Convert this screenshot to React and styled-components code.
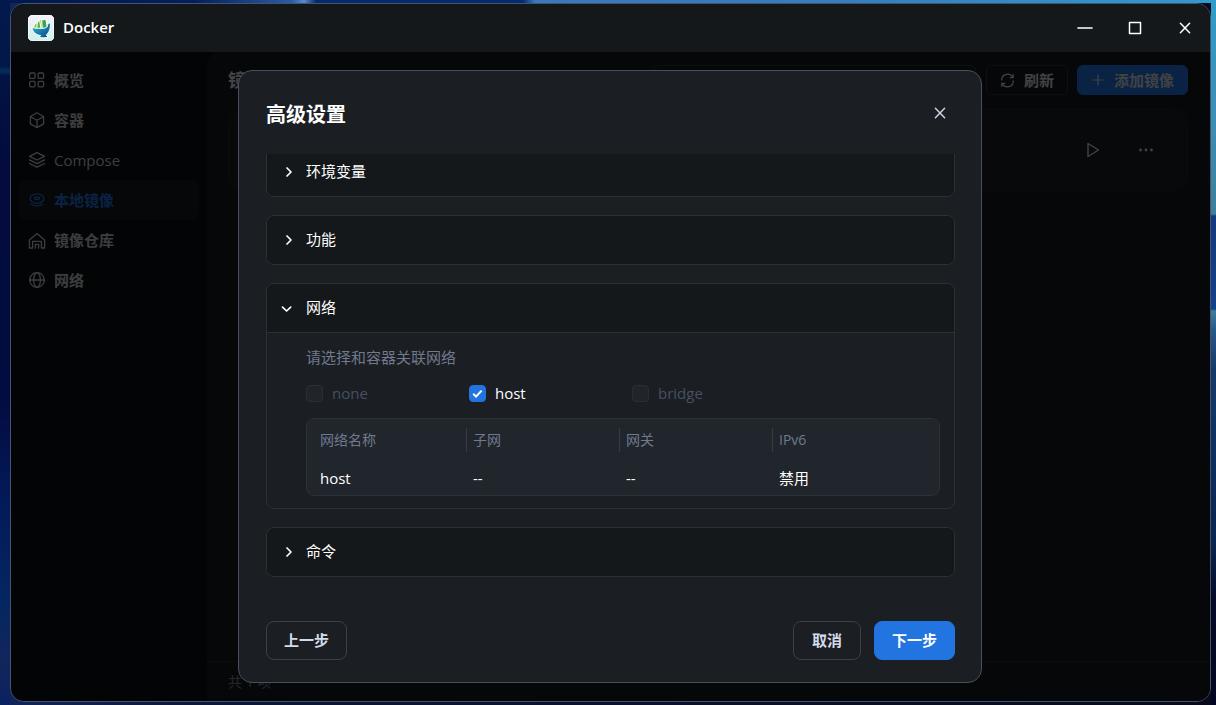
import React, { useLayoutEffect, useRef } from "react";
import styled, { createGlobalStyle, css } from "styled-components";

const GlobalStyle = createGlobalStyle`
  *, *::before, *::after { box-sizing: border-box; }
  body { margin: 0; background: #030a2c; }
  body, button, input, table { font-family: "Open Sans", "Noto Sans CJK SC", sans-serif; font-size: 15px; line-height: 20px; }
  button { border: 0; padding: 0; background: none; color: inherit; cursor: pointer; }
  svg { display: block; flex: none; fill: none; stroke: currentColor; stroke-linejoin: round; stroke-linecap: round; }
`;

const Desktop = styled.div`
  height: 100vh;
  padding: 3px 5px 3px 10px;
  background:
    linear-gradient(#2f9ccb 0, #3b8fb4 120px, #3c7f9c 214px, #143a7e 216px, #12408a 309px, #3d7f9c 311px, #28588a 330px, #163a68 368px, #0c2c5a 480px, #0a2450 544px, #050a26 600px, #030620 100%) right / 5px 100% no-repeat,
    linear-gradient(#03184c 0, #021848 66px, #06305e 71px, #021344 76px, #030c3c 160px, #030c40 400px, #031a58 500px, #042660 600px, #12265c 660px, #0a2260 100%) left / 10px 100% no-repeat,
    linear-gradient(90deg, #03184c 0, #04205a 16%, #2a5ca4 24%, #5a8cc8 25%, #042a70 26%, #042a70 43%, #3a78b8 44%, #3480ba 70%, #2f9ccb 100%) top / 100% 3px no-repeat,
    linear-gradient(90deg, #12265c 0, #0c1838 16%, #0a1026 60%, #080a1c 100%);
`;

const Window = styled.div`
  height: 100%;
  display: flex;
  flex-direction: column;
  overflow: hidden;
  border: 1px solid #46526e;
  border-radius: 14px;
  background: #0c1014;
  color: #dadde2;
`;

const TitleBar = styled.header`
  flex: none;
  display: flex;
  align-items: center;
  gap: 9px;
  height: 48px;
  padding: 0 0 0 17px;
  background: #14181a;
  color: #fff;
`;

const AppName = styled.h1`
  flex: 1;
  margin: 0;
  padding-bottom: 2px;
  font-size: 15px;
  font-weight: 600;
`;

const WindowControls = styled.div`
  display: flex;
`;

const WindowButton = styled.button`
  display: grid;
  place-items: center;
  width: 50px;
  height: 48px;
`;

const Body = styled.div`
  position: relative;
  flex: 1;
  min-height: 0;
  display: flex;
`;

const Sidebar = styled.nav`
  flex: none;
  width: 196px;
  padding: 8px;
`;

const NavLink = styled.a`
  display: flex;
  align-items: center;
  gap: 8px;
  height: 40px;
  padding: 0 9px;
  border-radius: 8px;
  color: ${(p) => (p.$active ? "#2274e0" : "#c8ccd2")};
  background: ${(p) => (p.$active ? "#14181c" : "transparent")};
  font-weight: ${(p) => (p.$latin ? 400 : 600)};
  text-decoration: none;
`;

const Main = styled.main`
  flex: 1;
  min-width: 0;
  display: flex;
  flex-direction: column;
  border-radius: 14px 0 0 0;
  background: #161a1e;
`;

const Toolbar = styled.div`
  display: flex;
  align-items: center;
  gap: 9px;
  padding: 13px 22px 14px 21px;
`;

const PageTitle = styled.h2`
  flex: 1;
  margin: 0;
  font-size: 18px;
  line-height: 30px;
`;

const Search = styled.input`
  width: 327px;
  height: 30px;
  border: 1px solid #30363c;
  border-radius: 8px;
  background: transparent;
`;

const ToolButton = styled.button`
  display: flex;
  align-items: center;
  justify-content: center;
  gap: 9px;
  height: 30px;
  padding: 0 13px;
  border: 1px solid ${(p) => (p.$primary ? "#2274e0" : "#30363c")};
  border-radius: 6px;
  background: ${(p) => (p.$primary ? "#2274e0" : "transparent")};
  font-weight: 600;
`;

const ImageCard = styled.section`
  display: flex;
  align-items: center;
  justify-content: flex-end;
  gap: 35px;
  height: 82px;
  margin: 0 22px 0 21px;
  padding: 0 32px;
  border: 1px solid #20252a;
  border-radius: 14px;
  background: #1a1e22;
`;

const StatusBar = styled.footer`
  height: 40px;
  margin-top: auto;
  padding: 10px 21px;
  border-top: 1px solid #262b30;
  color: #7c828c;
  font-size: 14px;
`;

const Overlay = styled.div`
  position: absolute;
  inset: 0;
  display: flex;
  justify-content: center;
  padding: 18px 19px 18px 18px;
  background: rgba(0, 0, 0, 0.7);
`;

const Dialog = styled.section`
  display: flex;
  flex-direction: column;
  width: 100%;
  max-width: 744px;
  padding: 22px 26px 22px 27px;
  border: 1px solid #46505e;
  border-radius: 14px;
  background: #1b1e23;
  color: #fff;
`;

const DialogHeader = styled.header`
  flex: none;
  display: flex;
  align-items: center;
  justify-content: space-between;
  height: 40px;
  margin-bottom: 21px;
`;

const DialogTitle = styled.h2`
  margin: 0;
  padding-top: 4px;
  font-size: 20px;
  line-height: 28px;
`;

const CloseButton = styled.button`
  display: grid;
  place-items: center;
  width: 30px;
  height: 40px;
  color: #ccd4e4;
`;

const SettingsList = styled.div`
  flex: 1;
  min-height: 0;
  display: flex;
  flex-direction: column;
  gap: 18px;
  overflow: auto;
  scrollbar-width: none;
`;

const Panel = styled.section`
  flex: none;
  border: 1px solid #2c3136;
  border-radius: 8px;
  overflow: hidden;
`;

const PanelToggle = styled.button`
  display: flex;
  align-items: center;
  gap: 7px;
  width: 100%;
  height: 48px;
  padding: 0 14px 2px;
  background: #14181a;
`;

const PanelBody = styled.div`
  padding: 14px 14px 12px 39px;
  border-top: 1px solid #2c3136;
`;

const Hint = styled.p`
  margin: 0 0 16px;
  color: #6f7a8e;
`;

const Options = styled.div`
  display: flex;
  margin-bottom: 15px;
`;

const Option = styled.label`
  display: flex;
  align-items: center;
  gap: 9px;
  width: 163px;
  color: ${(p) => (p.$disabled ? "#465062" : "#fff")};
`;

const Tick = styled.input`
  appearance: none;
  width: 17px;
  height: 17px;
  margin: 0;
  border: 1px solid #2a2f36;
  border-radius: 4px;
  background: #20242b;
  &:checked {
    border-color: #2274e0;
    background: #2274e0 url("data:image/svg+xml,%3Csvg xmlns='http://www.w3.org/2000/svg' viewBox='0 0 15 15'%3E%3Cpath d='M3.2 7.8l2.8 2.8 5.6-6' fill='none' stroke='white' stroke-width='2'/%3E%3C/svg%3E") center no-repeat;
  }
`;

const TableFrame = styled.div`
  border: 1px solid #2c3136;
  border-radius: 8px;
  background: #21252c;
`;

const NetworkTable = styled.table`
  width: 100%;
  table-layout: fixed;
  border-collapse: collapse;
  text-align: left;
  th, td { padding: 0; }
  td { height: 34px; padding-left: 7px; }
  td:first-child { padding-left: 13px; }
`;

const HeadCell = styled.th`
  height: 42px;
  color: #6f7a8e;
  font-size: 14px;
  font-weight: 400;
  span {
    display: block;
    padding: 2px 6px;
    border-left: 1px solid #363b44;
  }
  &:first-child span { border: 0; padding-left: 13px; }
`;

const Actions = styled.footer`
  flex: none;
  display: flex;
  gap: 13px;
  margin-top: 44px;
`;

const actionTone = {
  plain: css`border: 1px solid #38424a; color: #d4dbe8;`,
  primary: css`border: 1px solid #2274e0; background: #2274e0; color: #fff;`,
};

const ActionButton = styled.button`
  min-width: 68px;
  height: 39px;
  padding: 0 17px 2px;
  border-radius: 8px;
  font-weight: 600;
  ${(p) => actionTone[p.$tone || "plain"]}
  ${(p) => p.$start && css`margin-right: auto;`}
`;

const Icon = ({ size = 18, width = 1.4, children }) => (
  <svg width={size} height={size} viewBox="0 0 18 18" strokeWidth={width} aria-hidden="true">{children}</svg>
);

const GridIcon = () => <Icon width={1.3}><rect x="1.7" y="2" width="5.4" height="5.4" rx="1" /><rect x="10.2" y="2" width="5.4" height="5.4" rx="1" /><rect x="1.7" y="10.4" width="5.4" height="5.4" rx="1" /><rect x="10.2" y="10.4" width="5.4" height="5.4" rx="1" /></Icon>;
const BoxIcon = () => <Icon width={1.3}><path d="M9 1.8l6.6 3.7v7.4L9 16.6l-6.6-3.7V5.5z M2.6 5.7L9 9.2l6.4-3.5M9 9.2v7.2" /></Icon>;
const LayersIcon = () => <Icon width={1.3}><path d="M9 1.6l7.5 3.7L9 9 1.5 5.3zM1.5 8.9L9 12.6l7.5-3.7M1.5 12.5L9 16.2l7.5-3.7" /></Icon>;
const DiskIcon = () => <Icon width={1.3}><ellipse cx="9" cy="7.6" rx="6.8" ry="4.8" /><ellipse cx="9" cy="7.2" rx="2.4" ry="1.3" /><path d="M3.3 13.2c3 2.2 8.4 2.2 11.4 0" /></Icon>;
const HouseIcon = () => <Icon width={1.3}><path d="M1.4 9L9 2.6l7.600 6.400v8h-3.200v-6.600H4.600V17H1.400zM7.400 17v-3.600h3.200V17" /></Icon>;
const GlobeIcon = () => <Icon width={1.3}><circle cx="9" cy="9" r="7.3" /><ellipse cx="9" cy="9" rx="3.4" ry="7.3" /><path d="M1.7 9h14.6" /></Icon>;
const RefreshIcon = () => <Icon size={15} width={1.5}><path d="M2 8.400A7 7 0 0115.400 5.600M16 9.600A7 7 0 012.600 12.400M15.800 2v3.600h-3.600M2.200 16v-3.600h3.600" /></Icon>;
const PlusIcon = () => <Icon size={14} width={1.6}><path d="M9 2.5v13M2.5 9h13" /></Icon>;
const CrossIcon = () => <Icon width={1.5}><path d="M4.4 4.2l9.2 9.6M13.6 4.2l-9.2 9.6" /></Icon>;
const Chevron = ({ open }) => <Icon width={1.7}><path d={open ? "M1.5 9.2L5.6 13l4.1-3.8" : "M6 6L10 10l-4 4"} /></Icon>;

const Logo = () => (
  <svg width="26" height="26" viewBox="0 0 26 26" stroke="none" aria-hidden="true">
    <defs>
      <linearGradient id="tile" x2="0" y2="1"><stop stopColor="#f4f1fd" /><stop offset="1" stopColor="#cdf1ee" /></linearGradient>
      <linearGradient id="bowl" x2="1" y2="1"><stop stopColor="#3cc0cc" /><stop offset=".5" stopColor="#1780b0" /><stop offset="1" stopColor="#08467e" /></linearGradient>
    </defs>
    <rect width="26" height="26" rx="5" fill="url(#tile)" />
    <path d="M5.200 13.500L6.500 9.200l3-1.800 2-3 4 .6 1.200 9z" fill="#8ccb45" />
    <path d="M14 5l3.800-.8 1.800 9.400h-5z" fill="#35a455" />
    <path d="M9.500 7.400L11.500 4.400 13 14H9z" fill="#5fb448" />
    <path d="M3.800 12.600c4 1 9.500.8 13.400.4l2.300-1.600-.6-3.200 1.500.6 1.700-1.400c.6 2.400.3 5.500-.5 7.500-.8 2.400-2 4-3.300 5l1.800 2.200c-3 1-6.200 1-9 .1l1.600-1.600C8.600 19.800 4.600 18 3.800 12.600z" fill="url(#bowl)" />
  </svg>
);

const navItems = [
  { label: "概览", icon: GridIcon },
  { label: "容器", icon: BoxIcon },
  { label: "Compose", icon: LayersIcon, latin: true },
  { label: "本地镜像", icon: DiskIcon, active: true },
  { label: "镜像仓库", icon: HouseIcon },
  { label: "网络", icon: GlobeIcon },
];

const networks = [
  { name: "none", disabled: true },
  { name: "host", checked: true },
  { name: "bridge", disabled: true },
];

function SettingsPanel({ title, children }) {
  return (
    <Panel>
      <PanelToggle type="button" aria-expanded={Boolean(children)}>
        <Chevron open={Boolean(children)} />
        {title}
      </PanelToggle>
      {children && <PanelBody>{children}</PanelBody>}
    </Panel>
  );
}

function AdvancedSettings() {
  const list = useRef(null);
  useLayoutEffect(() => {
    list.current.scrollTop = list.current.scrollHeight;
  }, []);

  return (
    <Dialog role="dialog" aria-modal="true" aria-labelledby="dialog-title">
      <DialogHeader>
        <DialogTitle id="dialog-title">高级设置</DialogTitle>
        <CloseButton type="button" aria-label="关闭"><CrossIcon /></CloseButton>
      </DialogHeader>
      <SettingsList ref={list}>
        <SettingsPanel title="环境变量" />
        <SettingsPanel title="功能" />
        <SettingsPanel title="网络">
          <Hint>请选择和容器关联网络</Hint>
          <Options>
            {networks.map((n) => (
              <Option key={n.name} $disabled={n.disabled}>
                <Tick type="checkbox" defaultChecked={n.checked} disabled={n.disabled} />
                {n.name}
              </Option>
            ))}
          </Options>
          <TableFrame>
            <NetworkTable>
              <colgroup><col width="159" /><col width="153" /><col width="153" /><col /></colgroup>
              <thead>
                <tr>{["网络名称", "子网", "网关", "IPv6"].map((h) => <HeadCell key={h}><span>{h}</span></HeadCell>)}</tr>
              </thead>
              <tbody>
                <tr><td>host</td><td>--</td><td>--</td><td>禁用</td></tr>
              </tbody>
            </NetworkTable>
          </TableFrame>
        </SettingsPanel>
        <SettingsPanel title="命令" />
      </SettingsList>
      <Actions>
        <ActionButton type="button" $start>上一步</ActionButton>
        <ActionButton type="button">取消</ActionButton>
        <ActionButton type="button" $tone="primary">下一步</ActionButton>
      </Actions>
    </Dialog>
  );
}

export default function App() {
  return (
    <Desktop>
      <GlobalStyle />
      <Window>
        <TitleBar>
          <Logo />
          <AppName>Docker</AppName>
          <WindowControls>
            <WindowButton type="button" aria-label="最小化"><Icon width={1.6}><path d="M2 9h14" /></Icon></WindowButton>
            <WindowButton type="button" aria-label="最大化"><Icon width={1.5}><rect x="3.500" y="3.500" width="11" height="11" /></Icon></WindowButton>
            <WindowButton type="button" aria-label="关闭窗口"><CrossIcon /></WindowButton>
          </WindowControls>
        </TitleBar>
        <Body>
          <Sidebar>
            {navItems.map(({ label, icon: ItemIcon, active, latin }) => (
              <NavLink key={label} href="#" $active={active} $latin={latin}><ItemIcon />{label}</NavLink>
            ))}
          </Sidebar>
          <Main>
            <Toolbar>
              <PageTitle>镜像</PageTitle>
              <Search type="search" aria-label="搜索" />
              <ToolButton type="button"><RefreshIcon />刷新</ToolButton>
              <ToolButton type="button" $primary><PlusIcon />添加镜像</ToolButton>
            </Toolbar>
            <ImageCard>
              <button type="button" aria-label="运行"><Icon><path d="M4 2.500L14.500 9 4 15.500z" /></Icon></button>
              <button type="button" aria-label="更多"><Icon width={2.8}><path d="M3.500 9h.01M9 9h.01M14.500 9h.01" /></Icon></button>
            </ImageCard>
            <StatusBar>共 1 项</StatusBar>
          </Main>
          <Overlay><AdvancedSettings /></Overlay>
        </Body>
      </Window>
    </Desktop>
  );
}
